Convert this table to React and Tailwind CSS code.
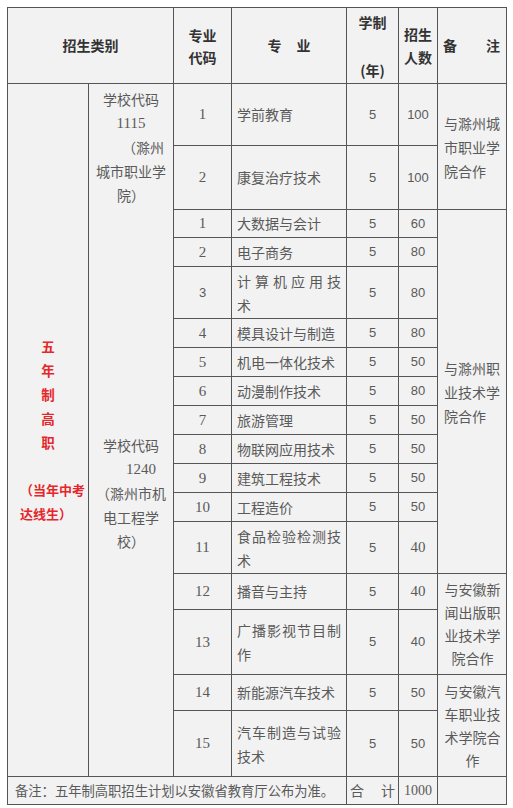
const ROWS = [
  { code: '1', name: '学前教育', years: '5', count: '100', remark: { text: '与滁州城市职业学院合作', span: 'row-span-2', align: 'left' } },
  { code: '2', name: '康复治疗技术', years: '5', count: '100' },
  { code: '1', name: '大数据与会计', years: '5', count: '60', remark: { text: '与滁州职业技术学院合作', span: 'row-span-11', align: 'left' } },
  { code: '2', name: '电子商务', years: '5', count: '80' },
  { code: '3', lines: ['计算机应用技', '术'], years: '5', count: '80', sansCode: true },
  { code: '4', name: '模具设计与制造', years: '5', count: '80' },
  { code: '5', name: '机电一体化技术', years: '5', count: '50' },
  { code: '6', name: '动漫制作技术', years: '5', count: '80' },
  { code: '7', name: '旅游管理', years: '5', count: '50' },
  { code: '8', name: '物联网应用技术', years: '5', count: '50' },
  { code: '9', name: '建筑工程技术', years: '5', count: '50' },
  { code: '10', name: '工程造价', years: '5', count: '50' },
  { code: '11', lines: ['食品检验检测技', '术'], years: '5', count: '40', serifCount: true },
  { code: '12', name: '播音与主持', years: '5', count: '40', serifCount: true, remark: { text: '与安徽新闻出版职业技术学院合作', span: 'row-span-2', align: 'center' } },
  { code: '13', lines: ['广播影视节目制', '作'], years: '5', count: '40' },
  { code: '14', name: '新能源汽车技术', years: '5', count: '50', remark: { text: '与安徽汽车职业技术学院合作', span: 'row-span-2', align: 'center' } },
  { code: '15', lines: ['汽车制造与试验', '技术'], years: '5', count: '50' },
]

const cell = 'bg-[#f2f2f2]'
const serif = "font-['Liberation_Serif','Noto_Sans_CJK_SC',serif]"
const sans = "font-['Liberation_Sans','Noto_Sans_CJK_SC',sans-serif]"

function Remark({ remark }) {
  return (
    <div
      className={`${cell} ${remark.span} flex items-center pl-[6px] pr-[5px] text-[14px] ${
        remark.align === 'center' ? 'text-center leading-[23px]' : 'text-left leading-[24px]'
      }`}
    >
      <div className="w-full">{remark.text}</div>
    </div>
  )
}

function MajorRow({ row }) {
  return (
    <>
      <div
        className={`${cell} flex items-center justify-center ${
          row.sansCode ? `${sans} text-[13px]` : `${serif} text-[15px]`
        }`}
      >
        {row.code}
      </div>
      {row.lines ? (
        <div className={`${cell} flex flex-col justify-center px-[5px] text-[14px] leading-[24px]`}>
          <div className="text-justify [text-align-last:justify]">{row.lines[0]}</div>
          <div>{row.lines[1]}</div>
        </div>
      ) : (
        <div className={`${cell} flex items-center pl-[5px] text-[14px]`}>{row.name}</div>
      )}
      <div className={`${cell} flex items-center justify-center text-[13px] ${sans}`}>{row.years}</div>
      <div
        className={`${cell} flex items-center justify-center ${
          row.serifCount ? `${serif} text-[15px]` : `${sans} text-[13px]`
        }`}
      >
        {row.count}
      </div>
      {row.remark && <Remark remark={row.remark} />}
    </>
  )
}

export default function App() {
  return (
    <div className="min-h-[808px] w-[513px] bg-white pt-[7px] pl-[7px] font-['Noto_Sans_CJK_SC',sans-serif] text-[#5a5a5a]">
      <div className="grid w-fit gap-px bg-[#555] p-px grid-cols-[80px_84px_57px_114px_51px_38px_68px] grid-rows-[75px_61px_63px_27px_28px_51px_28px_28px_28px_28px_28px_28px_28px_51px_35px_64px_35px_65px_27px]">
        {/* Header */}
        <div className={`${cell} col-span-2 flex items-center justify-center text-[14px] font-bold text-[#333]`}>
          招生类别
        </div>
        <div className={`${cell} flex flex-col items-center justify-center text-[14px] font-bold leading-[22px] text-[#333]`}>
          <span>专业</span>
          <span>代码</span>
        </div>
        <div className={`${cell} flex items-center justify-center gap-[15px] text-[14px] font-bold text-[#333]`}>
          <span>专</span>
          <span>业</span>
        </div>
        <div className={`${cell} flex flex-col items-center justify-center text-[14px] font-bold leading-[24px] text-[#333]`}>
          <span>学制</span>
          <span>&nbsp;</span>
          <span>(年)</span>
        </div>
        <div className={`${cell} flex flex-col items-center justify-center text-[14px] font-bold leading-[23px] text-[#333]`}>
          <span>招生</span>
          <span>人数</span>
        </div>
        <div className={`${cell} flex items-center justify-between pl-[5px] pr-[6px] text-[14px] font-bold text-[#333]`}>
          <span>备</span>
          <span>注</span>
        </div>

        {/* Category */}
        <div className={`${cell} row-span-17 flex flex-col justify-center text-[13.5px] font-bold leading-[24px] text-[#e5262b]`}>
          <div className="flex flex-col items-center">
            <span>五</span>
            <span>年</span>
            <span>制</span>
            <span>高</span>
            <span>职</span>
            <span>&nbsp;</span>
          </div>
          <div className="pl-[12px] text-[13px]">
            <div>（当年中考</div>
            <div>达线生）</div>
          </div>
        </div>

        {/* School codes, no rule between the two schools */}
        <div className={`${cell} row-span-17 flex flex-col text-[14px] leading-[24px]`}>
          <div className="flex h-[126px] flex-col justify-center">
            <div className="text-center">学校代码</div>
            <div className={`text-center text-[15px] ${serif}`}>1115</div>
            <div className="pr-[9px] text-right">（滁州</div>
            <div className="text-center">城市职业学</div>
            <div className="text-center">院）</div>
          </div>
          <div className="flex flex-1 flex-col justify-center">
            <div className="text-center">学校代码</div>
            <div className={`pr-[17px] text-right text-[15px] ${serif}`}>1240</div>
            <div className="text-center">（滁州市机</div>
            <div className="pl-[14px] text-left">电工程学</div>
            <div className="text-center">校）</div>
          </div>
        </div>

        {ROWS.map((row, i) => (
          <MajorRow key={i} row={row} />
        ))}

        {/* Footer */}
        <div className={`${cell} col-span-4 flex items-center pl-[7px] text-[13.3px]`}>
          备注：五年制高职招生计划以安徽省教育厅公布为准。
        </div>
        <div className={`${cell} flex items-center justify-between px-[3px] text-[14px]`}>
          <span>合</span>
          <span>计</span>
        </div>
        <div className={`${cell} flex items-center justify-center text-[14px] ${serif}`}>1000</div>
        <div className={cell} />
      </div>
    </div>
  )
}
